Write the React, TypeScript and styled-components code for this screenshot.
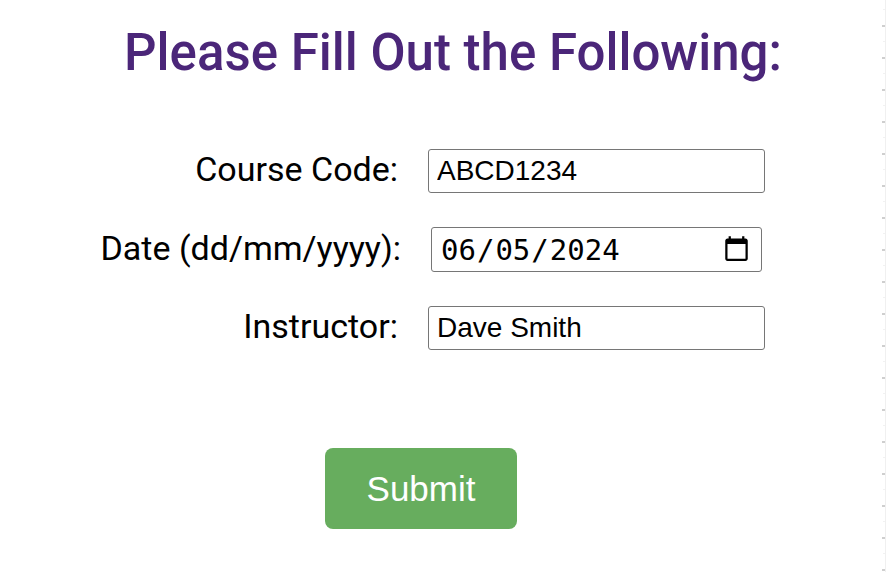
import React from "react";
import styled, { createGlobalStyle } from "styled-components";

const Global = createGlobalStyle`
  html, body { margin: 0; padding: 0; background: #ffffff; }
  body { font-family: Roboto, "Liberation Sans", sans-serif; }
`;

const Page = styled.div`
  position: relative;
  width: 886px;
  height: 572px;
  overflow: hidden;
  background: #ffffff;
`;

const Title = styled.h1`
  margin: 0;
  padding: 23px 0 0 20px;
  text-align: center;
  font-family: Roboto, sans-serif;
  font-weight: 500;
  font-size: 51px;
  line-height: 60px;
  color: #4b2679;
`;

const Form = styled.form`
  display: flex;
  flex-direction: column;
  align-items: flex-start;
  padding-top: 66px;
`;

const Fields = styled.div`
  display: grid;
  grid-template-columns: 398px 337px;
  column-gap: 30px;
  row-gap: 34px;
  align-items: center;
`;

const Label = styled.label<{ $shift?: number }>`
  justify-self: end;
  font-family: Roboto, sans-serif;
  font-size: 34px;
  line-height: 40px;
  color: #000;
  margin-right: ${(p) => p.$shift ?? 0}px;
  margin-top: -4px;
`;

const TextInput = styled.input`
  box-sizing: border-box;
  width: 337px;
  height: 44px;
  margin: 0;
  padding: 0 8px;
  border: 1px solid #767676;
  border-radius: 3px;
  font-family: "Liberation Sans", Arial, sans-serif;
  font-size: 28px;
  color: #000;
  background: #fff;
  outline: none;
`;

const DateInput = styled.input`
  box-sizing: border-box;
  width: 331px;
  height: 45px;
  margin: 0 0 0 3px;
  padding: 0 8px;
  border: 1px solid #767676;
  border-radius: 3px;
  font-family: "DejaVu Sans Mono", monospace;
  font-size: 29px;
  color: #000;
  background: #fff;
  outline: none;
`;

const ButtonRow = styled.div`
  display: flex;
  padding: 98px 0 0 325px;
`;

const SubmitButton = styled.button`
  width: 192px;
  height: 81px;
  border: none;
  border-radius: 8px;
  background: #67ad5e;
  color: #ffffff;
  font-family: "Liberation Sans", Arial, sans-serif;
  font-size: 35px;
  cursor: pointer;
`;

const Ruler = styled.div`
  position: absolute;
  top: 0;
  right: 0;
  width: 3px;
  height: 100%;
  border-right: 1px solid #f0f0f0;
  background-image:
    repeating-linear-gradient(to bottom, transparent 0 25px, #cfcfcf 25px 27px, transparent 27px 32px),
    repeating-linear-gradient(to bottom, transparent 0 9px, #f2f2f2 9px 10px, transparent 10px 16px);
  background-size: 3px 100%, 2px 100%;
  background-position: 0 0, 1px 0;
  background-repeat: no-repeat;
`;

export default function App() {
  return (
    <Page>
      <Global />
      <Title>Please Fill Out the Following:</Title>
      <Form onSubmit={(e) => e.preventDefault()}>
        <Fields>
          <Label htmlFor="course">Course Code:</Label>
          <TextInput id="course" type="text" defaultValue="ABCD1234" />
          <Label htmlFor="date" $shift={-3}>Date (dd/mm/yyyy):</Label>
          <DateInput id="date" type="date" defaultValue="2024-06-05" />
          <Label htmlFor="instructor">Instructor:</Label>
          <TextInput id="instructor" type="text" defaultValue="Dave Smith" />
        </Fields>
      </Form>
      <ButtonRow>
        <SubmitButton type="submit">Submit</SubmitButton>
      </ButtonRow>
      <Ruler />
    </Page>
  );
}
